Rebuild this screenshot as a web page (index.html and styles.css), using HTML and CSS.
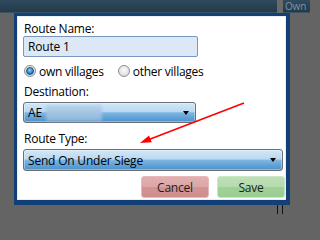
FILE: index.html
```html
<!DOCTYPE html>
<html>
<head>
<meta charset="utf-8">
<link rel="stylesheet" href="styles.css">
</head>
<body>
<div class="app">
  <div class="pane left">
    <div class="bar"></div>
    <div class="pane-body"></div>
  </div>
  <div class="splitter"><div class="splitter-cap"></div></div>
  <div class="pane right">
    <div class="bar"><span class="own">Own</span></div>
    <div class="pane-body"></div>
  </div>
</div>

<div class="dialog">
  <div class="label">Route Name:</div>
  <div class="textbox">Route 1</div>
  <div class="radios">
    <label class="radio"><span class="dot checked"></span><span>own villages</span></label>
    <label class="radio"><span class="dot"></span><span>other villages</span></label>
  </div>
  <div class="label dest">Destination:</div>
  <div class="combo">
    <span class="value">AE<span class="blur"></span></span>
    <span class="caret"></span>
  </div>
  <div class="label rt">Route Type:</div>
  <div class="combo wide">
    <span class="value">Send On Under Siege</span>
    <span class="caret"></span>
  </div>
  <div class="buttons">
    <button class="btn cancel">Cancel</button>
    <button class="btn save">Save</button>
  </div>
</div>

<svg class="annot" width="310" height="214" viewBox="0 0 310 214">
  <line x1="244" y1="103" x2="149" y2="139.5" stroke="#ff0000" stroke-width="1.6"/>
  <polygon points="140,143 151.8,142.3 149,135.6" fill="#ff0000"/>
</svg>
</body>
</html>
```

FILE: styles.css
```css
html, body {
  margin: 0;
  padding: 0;
}
body {
  width: 310px;
  height: 214px;
  overflow: hidden;
  background: #646464;
  font-family: "Open Sans", "Noto Sans", sans-serif;
  position: relative;
}
.app {
  display: flex;
  height: 214px;
}
.pane {
  display: flex;
  flex-direction: column;
}
.left { width: 277px; }
.right { flex: 1; min-width: 0; }
.bar {
  height: 12px;
  background: linear-gradient(#2f4b5d, #233a4a);
  border-bottom: 1px solid #3b5263;
}
.pane-body {
  flex: 1;
  background: #646464;
}
.splitter {
  width: 6px;
  background: linear-gradient(90deg, #111 1px, #666 1px, #666 5px, #111 5px);
}
.splitter-cap {
  height: 13px;
  background: #6a6a6a;
}
.own {
  display: block;
  padding: 1px 0 0 2px;
  font-size: 10px;
  line-height: 10px;
  letter-spacing: -0.2px;
  color: #7f93a4;
  white-space: nowrap;
}

.dialog {
  position: absolute;
  left: 14px;
  top: 13px;
  width: 262px;
  background: #fff;
  border-style: solid;
  border-color: #123f76;
  border-width: 3px 4px 5px 3px;
  padding: 5px 1px 2px 6px;
  font-size: 12px;
  color: #000;
  box-shadow: inset 0 0 0 1px #e6edf5;
}
.label {
  line-height: 15px;
  padding-left: 1px;
  letter-spacing: -0.25px;
}
.textbox {
  box-sizing: border-box;
  width: 175px;
  height: 21px;
  border: 1px solid #7896bf;
  border-radius: 2px;
  background: #dde8f6;
  padding-left: 4px;
  line-height: 19px;
  letter-spacing: -0.2px;
}
.radios {
  display: flex;
  align-items: center;
  height: 18px;
  margin-top: 5px;
  padding-left: 1px;
  gap: 14px;
  letter-spacing: -0.25px;
}
.radio {
  display: flex;
  align-items: center;
  gap: 3px;
}
.dot {
  box-sizing: border-box;
  width: 12px;
  height: 12px;
  border-radius: 50%;
  border: 1px solid #8c8f92;
  background: radial-gradient(circle at 50% 40%, #fbfbfb, #d4d4d4);
  display: flex;
  align-items: center;
  justify-content: center;
}
.dot.checked::after {
  content: "";
  width: 6px;
  height: 6px;
  border-radius: 50%;
  border: 1px solid #19507e;
  background: radial-gradient(circle at 45% 35%, #8fd0f7, #1f77bd 70%);
}
.label.dest { margin-top: 4px; }
.label.rt { margin-top: 8px; }
.combo {
  box-sizing: border-box;
  width: 173px;
  height: 21px;
  margin-top: 3px;
  border: 1px solid #6b7077;
  border-radius: 3px;
  background: linear-gradient(#d2e7f7 0%, #b9d9f2 45%, #7db5e2 52%, #5e9fd5 80%, #4d92cc 100%);
  box-shadow: inset 0 0 0 1px rgba(255,255,255,0.35);
  display: flex;
  align-items: center;
  justify-content: space-between;
  padding: 0 6px 0 4px;
  letter-spacing: -0.2px;
}
.combo.wide {
  width: 260px;
  height: 22px;
}
.value {
  display: flex;
  align-items: center;
}
.blur {
  display: inline-block;
  width: 56px;
  height: 16px;
  margin-left: 4px;
  background: linear-gradient(#b9d3ea, #8bb6dc);
  filter: blur(1.5px);
}
.caret {
  width: 0;
  height: 0;
  border-left: 3px solid transparent;
  border-right: 3px solid transparent;
  border-top: 4px solid #000;
}
.buttons {
  display: flex;
  justify-content: flex-end;
  gap: 8px;
  margin-top: 5px;
}
.btn {
  box-sizing: border-box;
  width: 68px;
  height: 22px;
  border-radius: 3px;
  font-family: inherit;
  font-size: 12px;
  color: #1e1e1e;
  padding: 0;
  letter-spacing: -0.2px;
}
.cancel {
  border: 1px solid #e8b9b9;
  background: linear-gradient(#e2b0b0 0%, #dca6a6 48%, #d29393 52%, #cf8e8e 100%);
}
.save {
  border: 1px solid #c9e7c3;
  background: linear-gradient(#bfdfb9 0%, #b5dbae 48%, #9fd197 52%, #99ce91 100%);
}
.annot {
  position: absolute;
  left: 0;
  top: 0;
  pointer-events: none;
}
```
